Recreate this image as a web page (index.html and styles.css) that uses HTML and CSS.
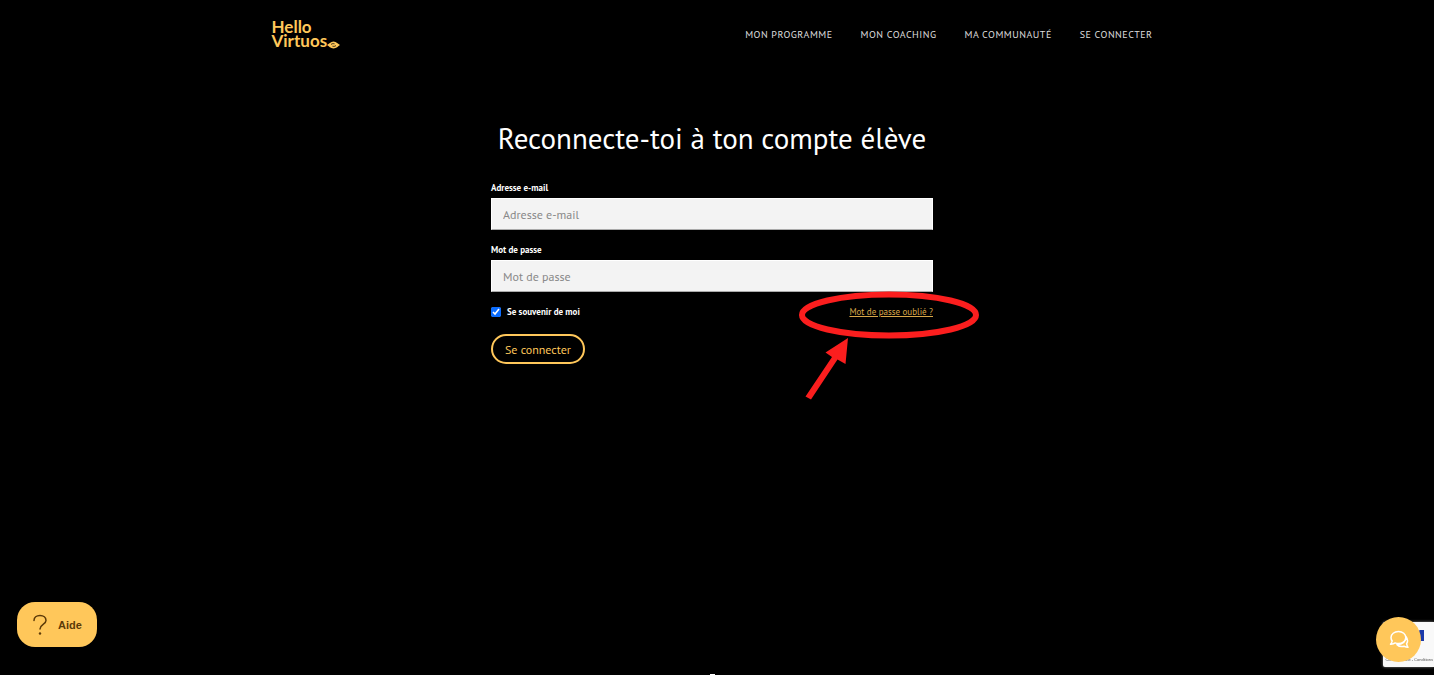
FILE: index.html
```html
<!DOCTYPE html>
<html lang="fr">
<head>
  <meta charset="UTF-8">
  <meta name="viewport" content="width=device-width, initial-scale=1">
  <title>Hello Virtuos</title>
  <link rel="stylesheet" href="styles.css">
</head>
<body>

  <header class="header">
    <a class="logo" href="#">
      Hello<br>Virtuos
      <svg class="logo-note" viewBox="0 0 13 8" width="13" height="8" aria-hidden="true">
        <path d="M0 4C2 3 3.500.5 6.500.5S11 3 13 4C11 5 9.500 7.500 6.500 7.500S2 5 0 4z" fill="#ffc75a"/>
        <path d="M4 3.600C5 2.500 6 2.500 7.500 2.800M9 4.400C8 5.500 7 5.500 5.500 5.200" stroke="#000" stroke-width=".8" fill="none"/>
      </svg>
    </a>
    <nav class="nav">
      <a href="#">Mon programme</a>
      <a href="#">Mon coaching</a>
      <a href="#">Ma communauté</a>
      <a href="#">Se connecter</a>
    </nav>
  </header>

  <main class="login">
    <h1>Reconnecte-toi à ton compte élève</h1>

    <form>
      <div class="form-group">
        <label for="email">Adresse e-mail</label>
        <input type="email" id="email" placeholder="Adresse e-mail">
      </div>
      <div class="form-group">
        <label for="password">Mot de passe</label>
        <input type="password" id="password" placeholder="Mot de passe">
      </div>
      <div class="form-row">
        <input type="checkbox" id="remember" checked>
        <label for="remember">Se souvenir de moi</label>
        <div class="forgot">
          <a href="#">Mot de passe oublié ?</a>
          <svg class="highlight" viewBox="0 0 190 120" width="190" height="120" aria-hidden="true">
            <ellipse cx="94" cy="30" rx="87" ry="20.500" fill="none" stroke="#fb1e1e" stroke-width="6"/>
            <path d="M10.500 111.500 37 72l-6.500-4.500L53 53l-2.500 26-8-4.500-26.500 40z" fill="#fb1e1e"/>
          </svg>
        </div>
      </div>
      <button type="submit" class="submit">Se connecter</button>
    </form>
  </main>

  <footer class="footer"></footer>

  <button type="button" class="help">
    <svg viewBox="0 0 16 22" width="16" height="22" aria-hidden="true">
      <path d="M2 6.500C2 3.500 4.500 1.500 8 1.500s6 2 6 5c0 4-6 4-6 8.500" fill="none" stroke="#5c3a08" stroke-width="1.500" stroke-linecap="round"/>
      <circle cx="8" cy="19.500" r="1.200" fill="#5c3a08"/>
    </svg>
    Aide
  </button>

  <aside class="captcha">
    <svg viewBox="0 0 10 14" width="10" height="14" aria-hidden="true">
      <path d="M9 1v11H5V5L2 7V3l3-2z" fill="#1c3aa9"/>
    </svg>
    <p><a href="#">Confidentialité</a> - <a href="#">Conditions</a></p>
  </aside>

  <button type="button" class="chat" aria-label="Chat">
    <svg viewBox="0 0 20 20" width="20" height="20" fill="none" stroke="#fff" stroke-width="1.500" stroke-linejoin="round" aria-hidden="true">
      <path d="M9.500 1.500c4.200 0 7.300 2.600 7.300 6s-3.100 6-7.300 6c-1.200 0-2.300-.2-3.300-.6-1.200.9-2.700 1.400-4.700 1.300.9-1 1.500-2 1.700-3.200C2.400 9.900 2 8.800 2 7.500c0-3.400 3.300-6 7.500-6z"/>
      <path d="M17 6.800c1.800 2.200 2 4.700.6 6.900.2 1.400.7 2.500 1.400 3.600-1.500 0-2.800-.4-4-1.100-2.500.8-5.200.2-7-1.600 5.500-.2 9.500-3.300 9-7.800z"/>
    </svg>
  </button>

</body>
</html>
```

FILE: styles.css
```css
* {
  box-sizing: border-box;
}

body {
  display: flex;
  flex-direction: column;
  margin: 0;
  min-height: 100vh;
  padding-right: 10px;
  background: #000;
  color: #fff;
  font-family: "PT Sans", "Noto Sans", sans-serif;
}

.header {
  display: flex;
  align-items: center;
  justify-content: space-between;
  width: 100%;
  max-width: 881px;
  height: 68px;
  margin: 0 auto;
}

.logo {
  position: relative;
  color: #ffc75a;
  font-family: Lato, sans-serif;
  font-size: 17px;
  font-weight: bold;
  line-height: 14px;
  text-decoration: none;
}

.logo-note {
  position: absolute;
  left: 100%;
  bottom: -1px;
}

.nav {
  display: flex;
  gap: 28px;
}

.nav a {
  color: #ddd;
  font-size: 10px;
  letter-spacing: 0.05em;
  text-decoration: none;
  text-transform: uppercase;
}

.login {
  width: 100%;
  max-width: 462px;
  margin: 0 auto;
  padding: 50px 10px 0;
}

h1 {
  margin: 0;
  font-size: 29px;
  font-weight: normal;
  line-height: 40px;
  text-align: center;
}

form {
  padding-top: 22px;
}

.form-group {
  display: flex;
  flex-direction: column;
  margin-bottom: 12px;
}

label {
  font-size: 9px;
  font-weight: bold;
  line-height: 16px;
}

.form-group label {
  padding-bottom: 2px;
}

.form-group input {
  width: 100%;
  height: 32px;
  padding: 0 11px;
  border: 1px solid #fff;
  border-bottom-color: #aaa;
  background: #f3f3f3;
  color: #333;
  font-family: inherit;
  font-size: 12px;
}

.form-group input::placeholder {
  color: #888;
}

.form-row {
  display: flex;
  align-items: center;
  gap: 6px;
}

.form-row input {
  width: 10px;
  height: 10px;
  margin: 0;
  accent-color: #0a6cff;
}

.forgot {
  position: relative;
  margin-left: auto;
  font-size: 9px;
  line-height: 16px;
}

.forgot a {
  color: #d9a748;
}

/* ring and arrow drawn over the link */
.highlight {
  position: absolute;
  right: -52px;
  top: -19px;
  pointer-events: none;
}

.submit {
  height: 30px;
  margin-top: 14px;
  padding: 0 12px;
  border: 2px solid #ffc75a;
  border-radius: 15px;
  background: transparent;
  color: #ffc75a;
  font-family: inherit;
  font-size: 12px;
  cursor: pointer;
}

.footer {
  width: 5px;
  height: 1px;
  margin: auto auto 0;
  background: #fff;
}

.help {
  position: fixed;
  left: 17px;
  bottom: 28px;
  display: flex;
  align-items: center;
  gap: 10px;
  height: 45px;
  padding: 0 15px;
  border: none;
  border-radius: 18px;
  background: #ffc75a;
  color: #5c3a08;
  font-family: "Liberation Sans", sans-serif;
  font-size: 11px;
  font-weight: bold;
  cursor: pointer;
}

.captcha {
  position: fixed;
  right: 0;
  bottom: 8px;
  width: 51px;
  height: 45px;
  padding-top: 7px;
  border-radius: 2px 0 0 2px;
  background: #f9f9f9;
  box-shadow: 0 0 3px #888;
  color: #555;
  overflow: hidden;
}

.captcha svg {
  display: block;
  margin-left: 32px;
}

.captcha p {
  display: flex;
  justify-content: flex-end;
  gap: 1px;
  margin: 14px 1px 0 0;
  font-family: "Liberation Sans", sans-serif;
  font-size: 4px;
  line-height: 6px;
  white-space: nowrap;
}

.captcha a {
  color: inherit;
  text-decoration: none;
}

.chat {
  position: fixed;
  right: 13px;
  bottom: 13px;
  display: flex;
  align-items: center;
  justify-content: center;
  width: 45px;
  height: 45px;
  padding: 0;
  border: none;
  border-radius: 50%;
  background: #ffc75a;
  cursor: pointer;
}
```
